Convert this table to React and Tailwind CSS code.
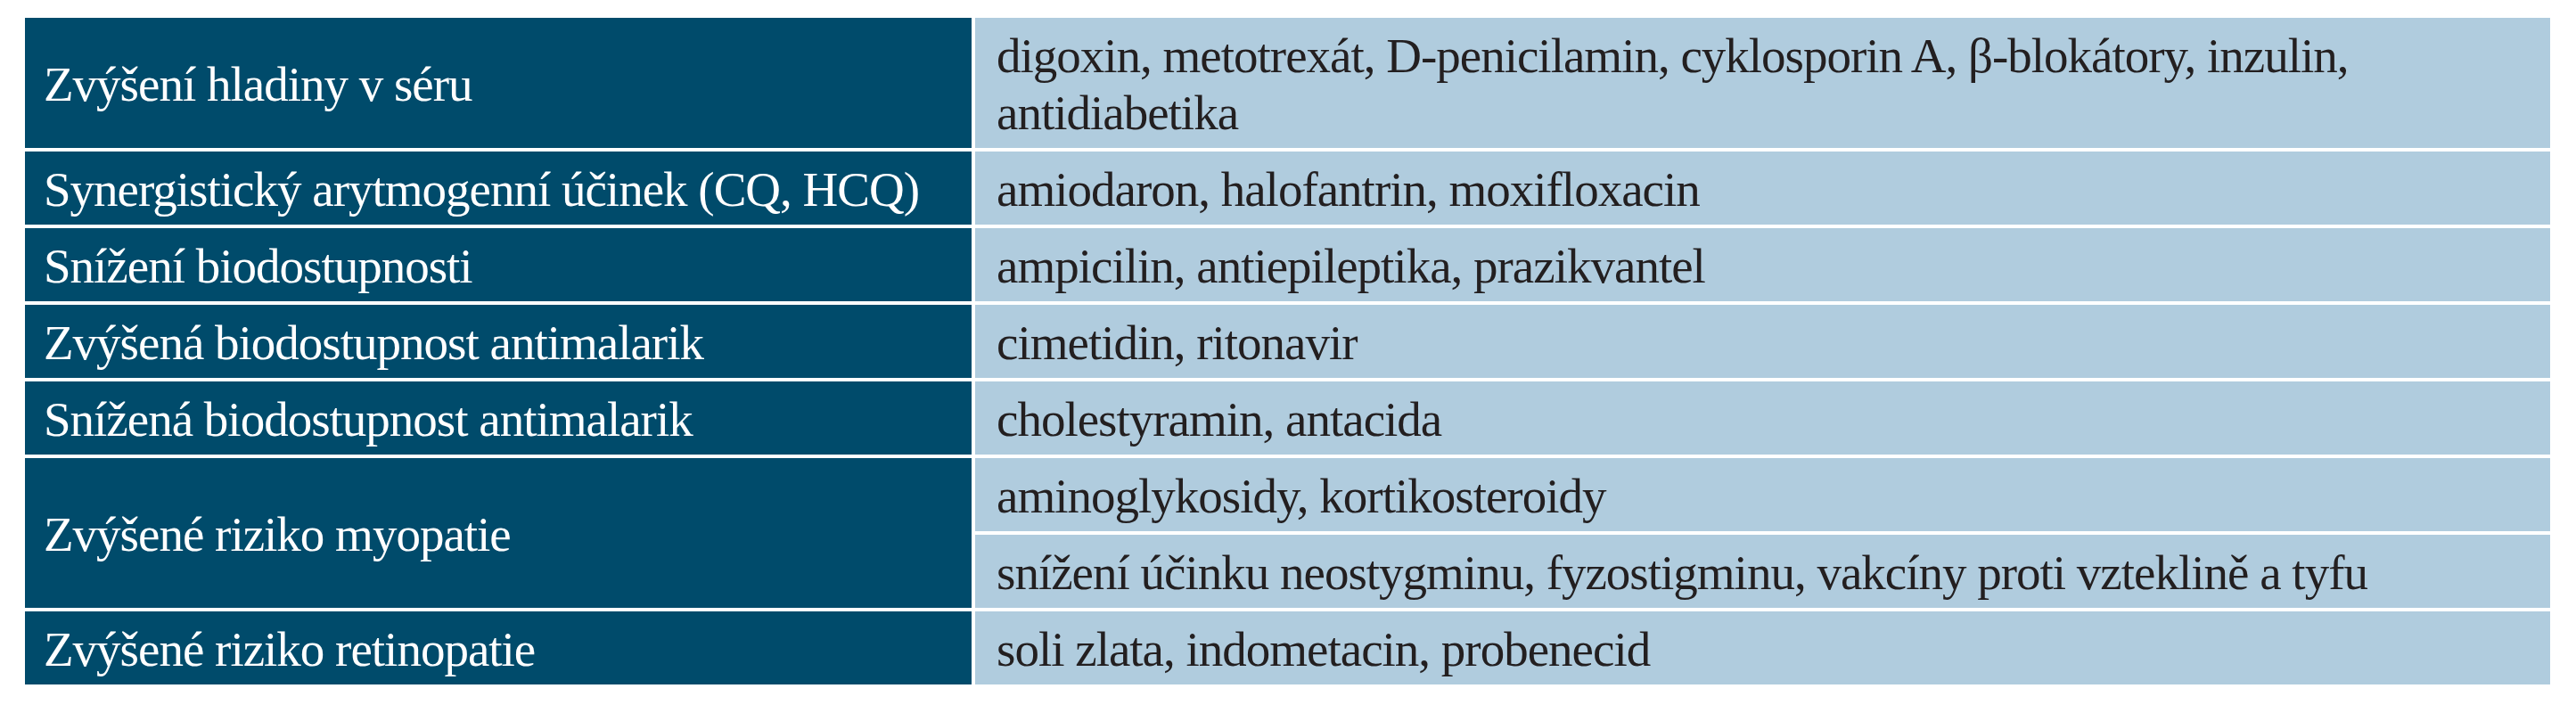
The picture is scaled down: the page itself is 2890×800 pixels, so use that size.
import React from "react";

const rows = [
  { label: "Zvýšení hladiny v séru", items: ["digoxin, metotrexát, D-penicilamin, cyklosporin A, β-blokátory, inzulin, antidiabetika"] },
  { label: "Synergistický arytmogenní účinek (CQ, HCQ)", items: ["amiodaron, halofantrin, moxifloxacin"] },
  { label: "Snížení biodostupnosti", items: ["ampicilin, antiepileptika, prazikvantel"] },
  { label: "Zvýšená biodostupnost antimalarik", items: ["cimetidin, ritonavir"] },
  { label: "Snížená biodostupnost antimalarik", items: ["cholestyramin, antacida"] },
  {
    label: "Zvýšené riziko myopatie",
    items: [
      "aminoglykosidy, kortikosteroidy",
      "snížení účinku neostygminu, fyzostigminu, vakcíny proti vzteklině a tyfu",
    ],
  },
  { label: "Zvýšené riziko retinopatie", items: ["soli zlata, indometacin, probenecid"] },
];

function LabelCell({ text, span }) {
  return (
    <div
      className={`flex items-center bg-[#004b6b] pl-[21px] pr-4 pt-[4px] font-['Liberation_Serif','DejaVu_Serif',serif] text-white ${
        span === 2 ? "row-span-2" : ""
      }`}
    >
      {text}
    </div>
  );
}

function ValueCell({ text }) {
  return (
    <div className="bg-[#b0ccde] pl-[24px] pr-6 pt-[11px] pb-[7px] font-['Liberation_Serif','DejaVu_Serif',serif] text-[#231f20]">
      {text}
    </div>
  );
}

export default function App() {
  return (
    <div className="min-h-[800px] w-[2890px] bg-white pl-[28px] pt-[20px] font-['Liberation_Serif','DejaVu_Serif',serif]">
      <div className="grid grid-cols-[1062px_1767px] gap-[4px] text-[55px] leading-[64px] tracking-[-1px]">
        {rows.map((r) =>
          r.items.length === 2 ? (
            <React.Fragment key={r.label}>
              <LabelCell text={r.label} span={2} />
              <ValueCell text={r.items[0]} />
              <ValueCell text={r.items[1]} />
            </React.Fragment>
          ) : (
            <React.Fragment key={r.label}>
              <LabelCell text={r.label} />
              <ValueCell text={r.items[0]} />
            </React.Fragment>
          )
        )}
      </div>
    </div>
  );
}
